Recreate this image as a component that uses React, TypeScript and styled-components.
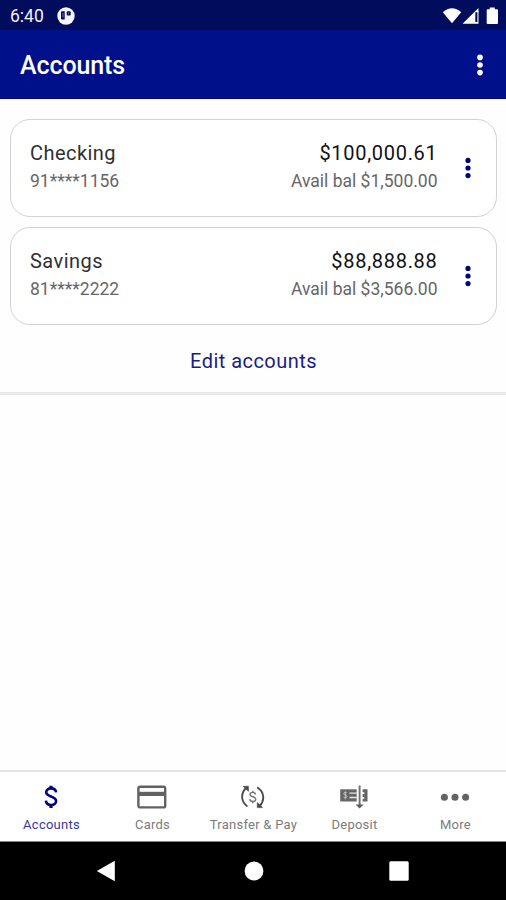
import React from "react";
import styled, { createGlobalStyle } from "styled-components";

const NAVY = "#00108a";

const Global = createGlobalStyle`
  * { box-sizing: border-box; }
  body { margin: 0; background: #fff; font-family: Roboto, "Liberation Sans", sans-serif; }
  button { border: 0; padding: 0; background: none; font: inherit; color: inherit; }
`;

const Screen = styled.div`
  display: flex;
  flex-direction: column;
  height: 900px;
  background: #fefefe;
`;
const StatusBar = styled.div`
  display: flex;
  align-items: center;
  height: 30px;
  padding: 2px 8px 0 10px;
  background: #010c5c;
  color: #f1f2fb;
`;
const Clock = styled.span`
  width: 47px;
  font-size: 17.5px;
  letter-spacing: 0;
  line-height: 28px;
`;
const StatusIcons = styled.div`
  display: flex;
  margin-left: auto;
`;
const AppBar = styled.header`
  display: flex;
  align-items: center;
  justify-content: space-between;
  height: 69px;
  padding: 2px 21.5px 0 20px;
  background: ${NAVY};
  border-bottom: 1px solid #000a70;
  color: #fff;
`;
const Title = styled.h1`
  margin: 0;
  font-size: 25px;
  font-weight: 500;
  letter-spacing: -0.1px;
`;
const Content = styled.main`
  flex: 1;
`;
const Accounts = styled.section`
  display: flex;
  flex-direction: column;
  gap: 10px;
  height: 296px;
  padding: 20px 9px 0 10px;
  border-bottom: 3px solid #e9e9e9;
`;
const Card = styled.article`
  display: flex;
  height: 98px;
  padding: 19px 13.5px 0 19px;
  border: 1.5px solid #d2d2d2;
  border-radius: 20px;
  background: #fff;
`;
const Column = styled.div<{ $end?: boolean }>`
  display: flex;
  flex-direction: column;
  align-items: ${(p) => (p.$end ? "flex-end" : "flex-start")};
  margin-left: ${(p) => (p.$end ? "auto" : "0")};
`;
const Primary = styled.span<{ $strong?: boolean }>`
  font-size: 20px;
  line-height: 28px;
  letter-spacing: ${(p) => (p.$strong ? "0.7px" : "0.45px")};
  color: ${(p) => (p.$strong ? "#111" : "#303030")};
`;
const Secondary = styled.span`
  font-size: 17.5px;
  line-height: 28px;
  color: #666;
`;
const MenuButton = styled.button`
  display: flex;
  width: 20px;
  height: 24px;
  margin: 17px 0 0 25px;
  color: #00057f;
`;
const EditLink = styled.button`
  align-self: center;
  margin-top: 12px;
  font-size: 20px;
  line-height: 28px;
  letter-spacing: 0.45px;
  color: #1a1c86;
`;
const TabBar = styled.nav`
  display: grid;
  grid-template-columns: repeat(5, 1fr);
  height: 72px;
  padding-left: 1px;
  border-top: 2px solid #e4e4e4;
  border-bottom: 1px solid #888;
  background: #fff;
`;
const Tab = styled.button<{ $active?: boolean }>`
  display: flex;
  flex-direction: column;
  align-items: center;
  padding-top: 9px;
  color: ${(p) => (p.$active ? NAVY : "#666")};
`;
const TabIcon = styled.span`
  display: flex;
  margin-right: 1px;
`;
const TabLabel = styled.span<{ $active?: boolean }>`
  font-size: 13px;
  line-height: 18px;
  margin-top: 3px;
  letter-spacing: 0.25px;
  white-space: nowrap;
  color: ${(p) => (p.$active ? "#38399a" : "#7b7b7b")};
`;
const SystemBar = styled.footer`
  display: grid;
  grid-template-columns: 212px 83px 208px;
  align-items: center;
  justify-items: center;
  height: 58px;
  background: #000;
  color: #fff;
`;

const Dots = ({ r = 2.8 }: { r?: number }) => (
  <svg width="10" height="24" viewBox="0 0 10 24" fill="currentColor">
    <circle cx="5" cy="4.4" r={r} />
    <circle cx="5" cy="12" r={r} />
    <circle cx="5" cy="19.6" r={r} />
  </svg>
);

const NotificationIcon = () => (
  <svg width="18" height="18" viewBox="0 0 18 18">
    <circle cx="9" cy="9" r="8.7" fill="#f5f5fd" />
    <path d="M7.7 4.2H5.2Q4 4.2 4 5.4v5.8q0 1.2 1.2 1.2h2.5z" fill="#010c5c" />
    <rect x="9.7" y="4.3" width="4" height="4.2" rx="1" fill="#010c5c" />
    <path d="M6 6v4.5M11.6 5.5v1.8" stroke="#9ba0cc" strokeWidth=".7" />
  </svg>
);

const SystemStatus = () => (
  <svg width="56" height="20" viewBox="0 0 56 20" fill="#fff">
    <path d="M.8 6.3Q10 -1.8 19.2 6.3L10 17.3z" />
    <path d="M20.5 17.7L36.5 2v4.2h-3.2v11.5z" />
    <path d="M33 16h3.5v1.7H33zM35.4 5h1.1v12h-1.1z" />
    <path d="M45.6 3.3h2.2V1.6h5v1.7H55q1 0 1 1v12.8q0 1-1 1h-9.3q-1 0-1-1V4.3q0-1 .9-1z" />
  </svg>
);

const DollarIcon = () => (
  <svg width="30" height="32" viewBox="0 0 30 32" fill="none" stroke="#00057f">
    <path d="M20.1 11.4C19.8 8.8 17.8 7.4 15 7.4c-2.8 0-4.8 1.5-4.8 3.9 0 5.2 9.9 3.2 9.9 8.8 0 2.4-2.1 3.9-4.9 3.9-3.1 0-5.1-1.6-5.3-4.3" strokeWidth="2.6" />
    <path d="M15 4.7V8M15 23v4" strokeWidth="3.2" />
  </svg>
);

const CardIcon = () => (
  <svg width="32" height="32" viewBox="0 0 32 32" fill="none" stroke="#626262">
    <rect x="2.4" y="5.8" width="26.8" height="20.6" rx="1.7" strokeWidth="2.4" />
    <path d="M2.2 12.9h27" strokeWidth="4.2" />
  </svg>
);

const TransferIcon = () => (
  <svg width="30" height="32" viewBox="0 0 30 32" fill="none" stroke="#4c4c4c">
    <path d="M9.4 25.4C3 20.8 2.2 12.6 8.2 6.8M19.2 6.3C26 10.6 27.4 19 21.6 25" strokeWidth="1.9" />
    <path d="M5.2 5.3h5.2v5zM24.5 26.6h-5.2v-5z" fill="#4c4c4c" strokeWidth=".7" />
    <path d="M17.5 13.5c-.3-1.5-1.3-2.1-2.8-2.1-1.6 0-2.7.7-2.7 2 0 3.1 5.8 1.6 5.8 4.8 0 1.6-1.2 2.3-3 2.3s-2.9-.8-3.1-2.3M14.8 9.7v1.9M14.8 20.4v1.9" stroke="#737373" strokeWidth="1.4" />
  </svg>
);

const DepositIcon = () => (
  <svg width="30" height="32" viewBox="0 0 30 32" fill="none">
    <path d="M1.2 8.3h16.5v12.2H1.2z" fill="#666" />
    <path d="M10.5 12.1h7.3M10.5 16.5h7.3" stroke="#e5e5e5" strokeWidth="1.4" />
    <path d="M7.8 11.9c-.6-.8-3.1-.8-3.1.7 0 1.9 3.2 1 3.2 2.9 0 1.6-2.7 1.7-3.3.5M6.3 10.3v8" stroke="#c4c4c4" strokeWidth="1" />
    <path d="M23.6 8.3h4.9v12.2h-4.9v-2.8h1.7v-1.6h-1.7v-3.2h1.7v-1.6h-1.7z" fill="#666" />
    <path d="M20.6 4.5V25" stroke="#707070" strokeWidth="1.9" />
    <path d="M16.6 23.6h8l-4 4z" fill="#5c5c5c" />
  </svg>
);

const MoreIcon = () => (
  <svg width="30" height="32" viewBox="0 0 30 32" fill="#636363">
    <circle cx="4.4" cy="16.2" r="3.5" />
    <circle cx="15" cy="16.2" r="3.5" />
    <circle cx="25.6" cy="16.2" r="3.5" />
  </svg>
);

const accounts = [
  { name: "Checking", number: "91****1156", balance: "$100,000.61", available: "$1,500.00" },
  { name: "Savings", number: "81****2222", balance: "$88,888.88", available: "$3,566.00" },
];

const tabs = [
  { label: "Accounts", Icon: DollarIcon, active: true },
  { label: "Cards", Icon: CardIcon },
  { label: "Transfer & Pay", Icon: TransferIcon },
  { label: "Deposit", Icon: DepositIcon },
  { label: "More", Icon: MoreIcon },
];

export default function App() {
  return (
    <Screen>
      <Global />
      <StatusBar>
        <Clock>6:40</Clock>
        <NotificationIcon />
        <StatusIcons><SystemStatus /></StatusIcons>
      </StatusBar>
      <AppBar>
        <Title>Accounts</Title>
        <Dots />
      </AppBar>
      <Content>
        <Accounts>
          {accounts.map((a) => (
            <Card key={a.name}>
              <Column>
                <Primary>{a.name}</Primary>
                <Secondary>{a.number}</Secondary>
              </Column>
              <Column $end>
                <Primary $strong>{a.balance}</Primary>
                <Secondary>Avail bal {a.available}</Secondary>
              </Column>
              <MenuButton aria-label="Account options"><Dots r={2.6} /></MenuButton>
            </Card>
          ))}
          <EditLink>Edit accounts</EditLink>
        </Accounts>
      </Content>
      <TabBar>
        {tabs.map(({ label, Icon, active }) => (
          <Tab key={label} $active={active}>
            <TabIcon><Icon /></TabIcon>
            <TabLabel $active={active}>{label}</TabLabel>
          </Tab>
        ))}
      </TabBar>
      <SystemBar>
        <svg width="20" height="22" viewBox="0 0 20 22"><path d="M.8 11L18.8.8v20.4z" fill="#fff" /></svg>
        <svg width="20" height="20" viewBox="0 0 20 20"><circle cx="10" cy="10" r="9.4" fill="#fff" /></svg>
        <svg width="20" height="20" viewBox="0 0 20 20"><rect x=".3" y=".3" width="19.4" height="19.4" rx="1.5" fill="#fff" /></svg>
      </SystemBar>
    </Screen>
  );
}
